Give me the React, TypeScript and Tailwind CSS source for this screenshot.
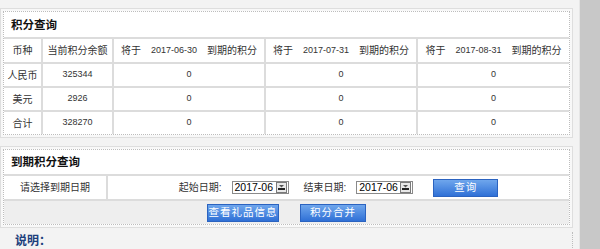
import React from "react";

const F = { fontFamily: '"Liberation Sans", "Noto Sans CJK SC", sans-serif' };

function Sel() {
  return (
    <div className="flex h-[13px] w-[57px] items-center border border-[#8a8a8a] bg-white">
      <span className="flex-1 pl-[2px] text-[10.5px] leading-none text-black">2017-06</span>
      <div className="mr-[1px] flex h-[11px] w-[11px] items-center justify-center border border-[#7a7a7a] bg-[#e8e8e8]">
        <svg width="7" height="5" viewBox="0 0 7 5">
          <rect x="0" y="3" width="7" height="2" fill="#222" />
          <path d="M1 0 L6 0 L3.5 2.5 Z" fill="#555" />
        </svg>
      </div>
    </div>
  );
}

function Btn({ children, w }: { children: React.ReactNode; w: string }) {
  return (
    <div
      className={`${w} flex h-[18px] items-center justify-center border border-[#2b63c0] bg-gradient-to-b from-[#6fa6ec] to-[#2f70d6] text-[10.5px] tracking-[1px] text-white`}
    >
      {children}
    </div>
  );
}

export default function App() {
  const hdr = (d: string) => (
    <div className="flex items-center justify-center gap-[10px]">
      <span>将于</span>
      <span className="text-[9px]">{d}</span>
      <span>到期的积分</span>
    </div>
  );
  const cell = "border-[#dcdcdc]";
  return (
    <div className="flex h-[249px] w-[600px] overflow-hidden text-[#333]" style={F}>
      <div className="flex w-[579px] flex-col bg-[#f3f3f3] pt-[8px]">
        {/* Panel 1 */}
        <div className="w-[573px] border border-[#dedede] bg-[#f8f8f8] p-[2px]">
          <div className="border border-dotted border-[#bdbdbd] bg-white">
            <div className="flex h-[25px] items-center pl-[7px] pt-[2px] text-[11.5px] font-bold text-[#111]">积分查询</div>
            <div className="grid grid-cols-[39px_71px_152px_152px_1fr] text-[10px]">
              {["币种", "当前积分余额"].map((t) => (
                <div key={t} className={`flex h-[25px] items-center justify-center border-t-2 border-r-2 ${cell}`}>{t}</div>
              ))}
              <div className={`flex h-[25px] items-center justify-center border-t-2 border-r-2 ${cell}`}>{hdr("2017-06-30")}</div>
              <div className={`flex h-[25px] items-center justify-center border-t-2 border-r-2 ${cell}`}>{hdr("2017-07-31")}</div>
              <div className={`flex h-[25px] items-center justify-center border-t-2 ${cell}`}>{hdr("2017-08-31")}</div>
              {[
                ["人民币", "325344"],
                ["美元", "2926"],
                ["合计", "328270"],
              ].map(([a, b]) => (
                <React.Fragment key={a}>
                  <div className={`flex h-[24px] items-center justify-center border-t-2 border-r-2 ${cell}`}>{a}</div>
                  <div className={`flex h-[24px] items-center justify-center border-t-2 border-r-2 ${cell} text-[9px]`}>{b}</div>
                  <div className={`flex h-[24px] items-center justify-center border-t-2 border-r-2 ${cell} text-[9px]`}>0</div>
                  <div className={`flex h-[24px] items-center justify-center border-t-2 border-r-2 ${cell} text-[9px]`}>0</div>
                  <div className={`flex h-[24px] items-center justify-center border-t-2 ${cell} text-[9px]`}>0</div>
                </React.Fragment>
              ))}
            </div>
          </div>
        </div>
        {/* Panel 2 */}
        <div className="mt-[8px] w-[573px] border border-[#dedede] bg-[#f8f8f8] p-[2px]">
          <div className="border border-dotted border-[#bdbdbd] bg-white">
            <div className="flex h-[24px] items-center pl-[7px] pt-[2px] text-[11.5px] font-bold text-[#111]">到期积分查询</div>
            <div className={`flex h-[25px] border-t-2 ${cell} text-[10px]`}>
              <div className={`flex w-[104px] items-center justify-center border-r-2 ${cell}`}>请选择到期日期</div>
              <div className="flex flex-1 items-center justify-center">
                <span>起始日期:</span>
                <div className="ml-[10px]"><Sel /></div>
                <span className="ml-[15px]">结束日期:</span>
                <div className="ml-[10px]"><Sel /></div>
                <div className="ml-[20px]"><Btn w="w-[65px]">查询</Btn></div>
              </div>
            </div>
            <div className={`flex h-[25px] items-center justify-center gap-[21px] border-t-2 ${cell} bg-[#eeeeee]`}>
              <Btn w="w-[72px]">查看礼品信息</Btn>
              <Btn w="w-[66px]">积分合并</Btn>
            </div>
          </div>
        </div>
        {/* 说明 */}
        <div className="mt-[4px] flex h-[30px] w-[573px] items-end border-r border-dotted border-[#bdbdbd] pl-[15px]">
          <span className="text-[12px] font-bold text-[#1d3f7c]">说明：</span>
        </div>
      </div>
      <div className="w-[21px] border-l border-[#e6e6e6] bg-[#c8c8c8]" />
    </div>
  );
}
